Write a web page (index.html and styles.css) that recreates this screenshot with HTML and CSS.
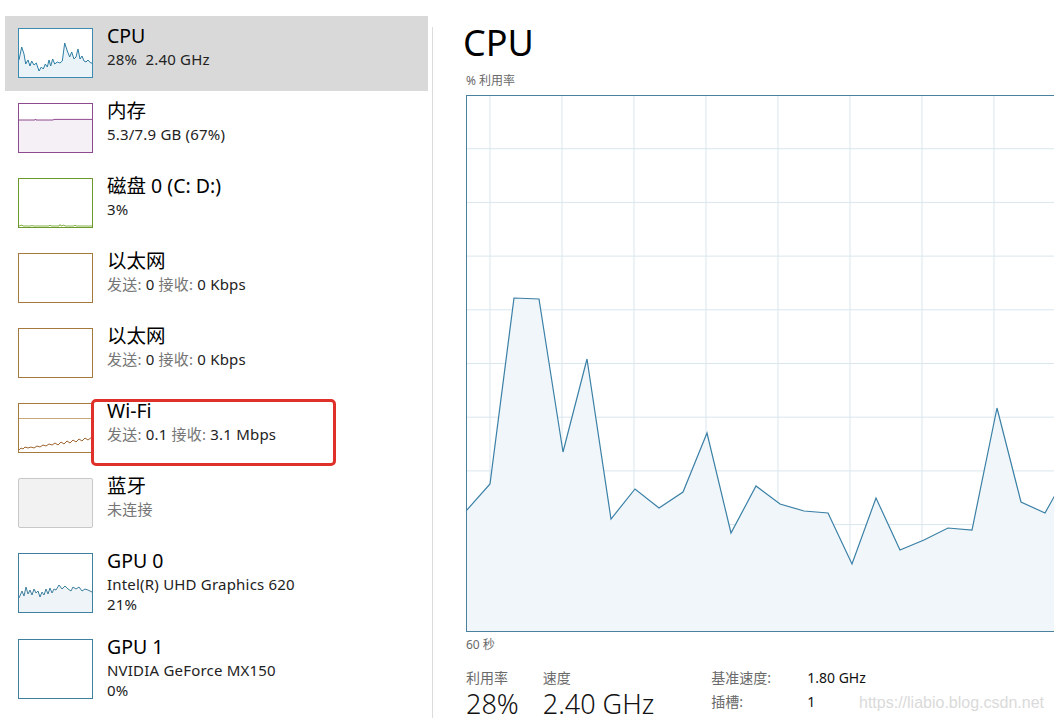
FILE: index.html
```html
<!DOCTYPE html>
<html lang="zh-CN">
<head>
<meta charset="utf-8">
<title>任务管理器 - 性能</title>
<link rel="stylesheet" href="styles.css">
</head>
<body>
<div class="app">
  <aside class="sidebar">
    <div class="item selected">
      <div class="thumb thumb-cpu">
        <svg viewBox="0 0 73 48" preserveAspectRatio="none">
          <polygon class="fill" points="0,31 2.7,18 5,25 6.7,35 9,31 11,37 12.7,32 15,36 17.3,34 20,42 22.3,38 24.3,40 26.3,35 28.3,38 30,31 31.7,37 33.7,30 35.7,35 38.3,33 41,34 43.3,32 45.7,14 48.3,22 50.7,28 52.7,23 55,30 57,28 59,20 61,30 63,27 65,32 67,33 69,31 71.7,34 73,34 73,48 0,48"/>
          <polyline class="line" points="0,31 2.7,18 5,25 6.7,35 9,31 11,37 12.7,32 15,36 17.3,34 20,42 22.3,38 24.3,40 26.3,35 28.3,38 30,31 31.7,37 33.7,30 35.7,35 38.3,33 41,34 43.3,32 45.7,14 48.3,22 50.7,28 52.7,23 55,30 57,28 59,20 61,30 63,27 65,32 67,33 69,31 71.7,34 73,34"/>
        </svg>
      </div>
      <div class="info">
        <div class="title">CPU</div>
        <div class="sub">28%&nbsp; 2.40 GHz</div>
      </div>
    </div>

    <div class="item">
      <div class="thumb thumb-mem">
        <svg viewBox="0 0 73 48" preserveAspectRatio="none">
          <polygon class="fill" points="0,16 16,16 16.5,15 17,16 34,16 35,15.4 73,15.4 73,48 0,48"/>
          <polyline class="line" points="0,16 16,16 16.5,15 17,16 34,16 35,15.4 73,15.4"/>
        </svg>
      </div>
      <div class="info">
        <div class="title">内存</div>
        <div class="sub">5.3/7.9 GB (67%)</div>
      </div>
    </div>

    <div class="item">
      <div class="thumb thumb-disk">
        <svg viewBox="0 0 73 48" preserveAspectRatio="none">
          <polyline class="line" points="0,47 3,46 4,47 12,47 13,46.3 14,47 30,47 31,46 32,47 40,47 41,45.5 42,47 45,46 46,47 55,47 56,46 57,47 73,47"/>
        </svg>
      </div>
      <div class="info">
        <div class="title">磁盘 0 (C: D:)</div>
        <div class="sub">3%</div>
      </div>
    </div>

    <div class="item">
      <div class="thumb thumb-net"></div>
      <div class="info">
        <div class="title">以太网</div>
        <div class="sub"><span class="lbl">发送:</span> 0 <span class="lbl">接收:</span> 0 Kbps</div>
      </div>
    </div>

    <div class="item">
      <div class="thumb thumb-net"></div>
      <div class="info">
        <div class="title">以太网</div>
        <div class="sub"><span class="lbl">发送:</span> 0 <span class="lbl">接收:</span> 0 Kbps</div>
      </div>
    </div>

    <div class="item">
      <div class="thumb thumb-net">
        <svg viewBox="0 0 73 48" preserveAspectRatio="none">
          <line class="ref" x1="0" y1="14.5" x2="73" y2="14.5"/>
          <polyline class="line" points="0,46 2,44 4,45 6,43 9,44 12,43 15,44 18,42 21,43 24,41 27,42 30,40 33,41 36,39 39,41 42,38 45,40 48,37 51,39 54,36 57,38 60,35 63,37 66,34 69,36 73,33"/>
        </svg>
      </div>
      <div class="info">
        <div class="title">Wi-Fi</div>
        <div class="sub"><span class="lbl">发送:</span> 0.1 <span class="lbl">接收:</span> 3.1 Mbps</div>
      </div>
    </div>

    <div class="item">
      <div class="thumb thumb-bt"></div>
      <div class="info">
        <div class="title">蓝牙</div>
        <div class="sub"><span class="lbl">未连接</span></div>
      </div>
    </div>

    <div class="item">
      <div class="thumb thumb-gpu tall">
        <svg viewBox="0 0 73 58" preserveAspectRatio="none">
          <polygon class="fill" points="0,44 3,37 5,42 7,33 9,40 11,36 13,41 15,35 17,39 19,37 21,43 23,38 25,41 27,35 29,40 31,34 33,39 35,35 37,36 40,31 43,35 46,32 49,35 52,37 54,33 57,35 60,33 63,37 66,35 69,36 73,38 73,58 0,58"/>
          <polyline class="line" points="0,44 3,37 5,42 7,33 9,40 11,36 13,41 15,35 17,39 19,37 21,43 23,38 25,41 27,35 29,40 31,34 33,39 35,35 37,36 40,31 43,35 46,32 49,35 52,37 54,33 57,35 60,33 63,37 66,35 69,36 73,38"/>
        </svg>
      </div>
      <div class="info">
        <div class="title">GPU 0</div>
        <div class="sub">Intel(R) UHD Graphics 620</div>
        <div class="sub">21%</div>
      </div>
    </div>

    <div class="item">
      <div class="thumb thumb-gpu tall"></div>
      <div class="info">
        <div class="title">GPU 1</div>
        <div class="sub">NVIDIA GeForce MX150</div>
        <div class="sub">0%</div>
      </div>
    </div>
  </aside>

  <main class="detail">
    <h1 class="heading">CPU</h1>
    <div class="axis-label">% 利用率</div>
    <div class="chart">
      <svg viewBox="466 95 640 537" width="640" height="537">
        <g class="grid">
          <line x1="466" y1="148.7" x2="1106" y2="148.7"/>
          <line x1="466" y1="202.4" x2="1106" y2="202.4"/>
          <line x1="466" y1="256.1" x2="1106" y2="256.1"/>
          <line x1="466" y1="309.8" x2="1106" y2="309.8"/>
          <line x1="466" y1="363.5" x2="1106" y2="363.5"/>
          <line x1="466" y1="417.2" x2="1106" y2="417.2"/>
          <line x1="466" y1="470.9" x2="1106" y2="470.9"/>
          <line x1="466" y1="524.6" x2="1106" y2="524.6"/>
          <line x1="466" y1="578.3" x2="1106" y2="578.3"/>
          <line x1="490" y1="95" x2="490" y2="632"/>
          <line x1="562" y1="95" x2="562" y2="632"/>
          <line x1="634" y1="95" x2="634" y2="632"/>
          <line x1="706" y1="95" x2="706" y2="632"/>
          <line x1="778" y1="95" x2="778" y2="632"/>
          <line x1="850" y1="95" x2="850" y2="632"/>
          <line x1="922" y1="95" x2="922" y2="632"/>
          <line x1="994" y1="95" x2="994" y2="632"/>
          <line x1="1066" y1="95" x2="1066" y2="632"/>
        </g>
        <polygon class="area" points="466,511 490,484 514,298 539,299 563,452 587,359 611,519 635,489 659,508 683,492 707,433 731,533 756,486 780,504 804,511 828,513 852,564 876,498 900,550 924,540 948,528 972,530 997,408 1021,502 1045,513 1069,470 1093,480 1106,490 1106,632 466,632"/>
        <polyline class="plot" points="466,511 490,484 514,298 539,299 563,452 587,359 611,519 635,489 659,508 683,492 707,433 731,533 756,486 780,504 804,511 828,513 852,564 876,498 900,550 924,540 948,528 972,530 997,408 1021,502 1045,513 1069,470 1093,480 1106,490"/>
      </svg>
    </div>
    <div class="axis-label time">60 秒</div>

    <div class="stats">
      <div class="stat">
        <div class="stat-label">利用率</div>
        <div class="stat-value">28%</div>
      </div>
      <div class="stat">
        <div class="stat-label">速度</div>
        <div class="stat-value">2.40 GHz</div>
      </div>
      <dl class="specs">
        <dt>基准速度:</dt><dd>1.80 GHz</dd>
        <dt>插槽:</dt><dd>1</dd>
      </dl>
    </div>
  </main>
</div>

<div class="highlight"></div>
<div class="watermark">https://liabio.blog.csdn.net</div>
</body>
</html>
```

FILE: styles.css
```css
html, body {
  margin: 0;
  padding: 0;
}

body {
  width: 1054px;
  height: 718px;
  overflow: hidden;
  background: #ffffff;
  font-family: "Noto Sans", "Noto Sans CJK SC", sans-serif;
  color: #1a1a1a;
  position: relative;
}

.app {
  display: flex;
  height: 718px;
}

/* ---------- Sidebar ---------- */
.sidebar {
  width: 423px;
  flex: none;
  padding: 16px 4px 0 5px;
  display: flex;
  flex-direction: column;
}

.item {
  display: flex;
  align-items: flex-start;
  gap: 14px;
  padding: 12px 0 13px 13px;
}

.item.selected {
  background: #d9d9d9;
}

.thumb {
  width: 73px;
  height: 48px;
  flex: none;
  border: 1px solid #999;
  background: #fff;
}

.thumb.tall {
  height: 58px;
}

.thumb svg {
  display: block;
  width: 100%;
  height: 100%;
}

.thumb .line {
  fill: none;
  stroke-width: 1;
  vector-effect: non-scaling-stroke;
}

.thumb-cpu { border-color: #3b8bb0; }
.thumb-cpu .line { stroke: #2e7ea5; }
.thumb-cpu .fill { fill: #eaf3f8; }

.thumb-mem { border-color: #8e4a8e; }
.thumb-mem .line { stroke: #8e4a8e; }
.thumb-mem .fill { fill: #f5eff6; }

.thumb-disk { border-color: #6d9a2e; }
.thumb-disk .line { stroke: #86b34a; }

.thumb-net { border-color: #a47a3e; }
.thumb-net .line { stroke: #a0642e; }
.thumb-net .ref { stroke: #c9a97c; stroke-width: 1; vector-effect: non-scaling-stroke; }

.thumb-bt {
  border-color: #c8c8c8;
  background: #f2f2f2;
  border-radius: 2px;
}

.thumb-gpu { border-color: #3f809e; }
.thumb-gpu .line { stroke: #3f7f9d; }
.thumb-gpu .fill { fill: #eef4f8; }

.info {
  margin-top: -6px;
}

.title {
  font-size: 19.5px;
  line-height: 27px;
  color: #000;
}

.sub {
  font-size: 15px;
  line-height: 20px;
  letter-spacing: 0.2px;
  color: #222;
}

.lbl {
  color: #767676;
}

/* ---------- Detail panel ---------- */
.detail {
  flex: 1;
  min-width: 0;
  padding: 21px 0 0 34px;
  background: linear-gradient(#dcdcdc, #dcdcdc) no-repeat 0 27px / 1px 100%;
  overflow: hidden;
}

.heading {
  margin: 0 0 0 -3px;
  font-size: 36px;
  line-height: 44px;
  font-weight: 400;
  color: #000;
  letter-spacing: 0;
}

.axis-label {
  font-size: 12px;
  line-height: 16px;
  color: #6a6a6a;
  margin-top: 8px;
}

.chart {
  margin-top: 6px;
  width: 640px;
  height: 537px;
  border-left: 1.5px solid #4a819f;
  border-top: 1.5px solid #4a819f;
  border-bottom: 1.5px solid #4a819f;
  box-sizing: border-box;
  overflow: hidden;
}

.chart svg {
  display: block;
  margin: -1.5px 0 0 -1.5px;
}

.grid line {
  stroke: #d9e6ee;
  stroke-width: 1;
}

.area {
  fill: #f1f6fa;
}

.plot {
  fill: none;
  stroke: #3a80a6;
  stroke-width: 1.2;
  stroke-linejoin: miter;
}

.axis-label.time {
  margin-top: 5px;
}

.stats {
  display: flex;
  align-items: flex-start;
  margin-top: 16px;
}

.stat {
  margin-right: 24px;
}

.stat-label {
  font-size: 14px;
  line-height: 18px;
  color: #6a6a6a;
}

.stat-value {
  font-size: 27px;
  line-height: 34px;
  color: #111;
  font-weight: 300;
}

.specs {
  margin: 0 0 0 33px;
  display: grid;
  grid-template-columns: 96px auto;
  row-gap: 6px;
  font-size: 14px;
  line-height: 18px;
}

.specs dt {
  color: #6a6a6a;
}

.specs dd {
  margin: 0;
  color: #111;
}

/* ---------- Overlays ---------- */
.highlight {
  position: absolute;
  left: 91px;
  top: 399px;
  width: 239px;
  height: 61px;
  border: 3px solid #e0302a;
  border-radius: 5px;
}

.watermark {
  position: absolute;
  left: 859px;
  top: 693px;
  font-family: "Liberation Sans", sans-serif;
  font-size: 16px;
  line-height: 20px;
  color: #dadada;
}
```
